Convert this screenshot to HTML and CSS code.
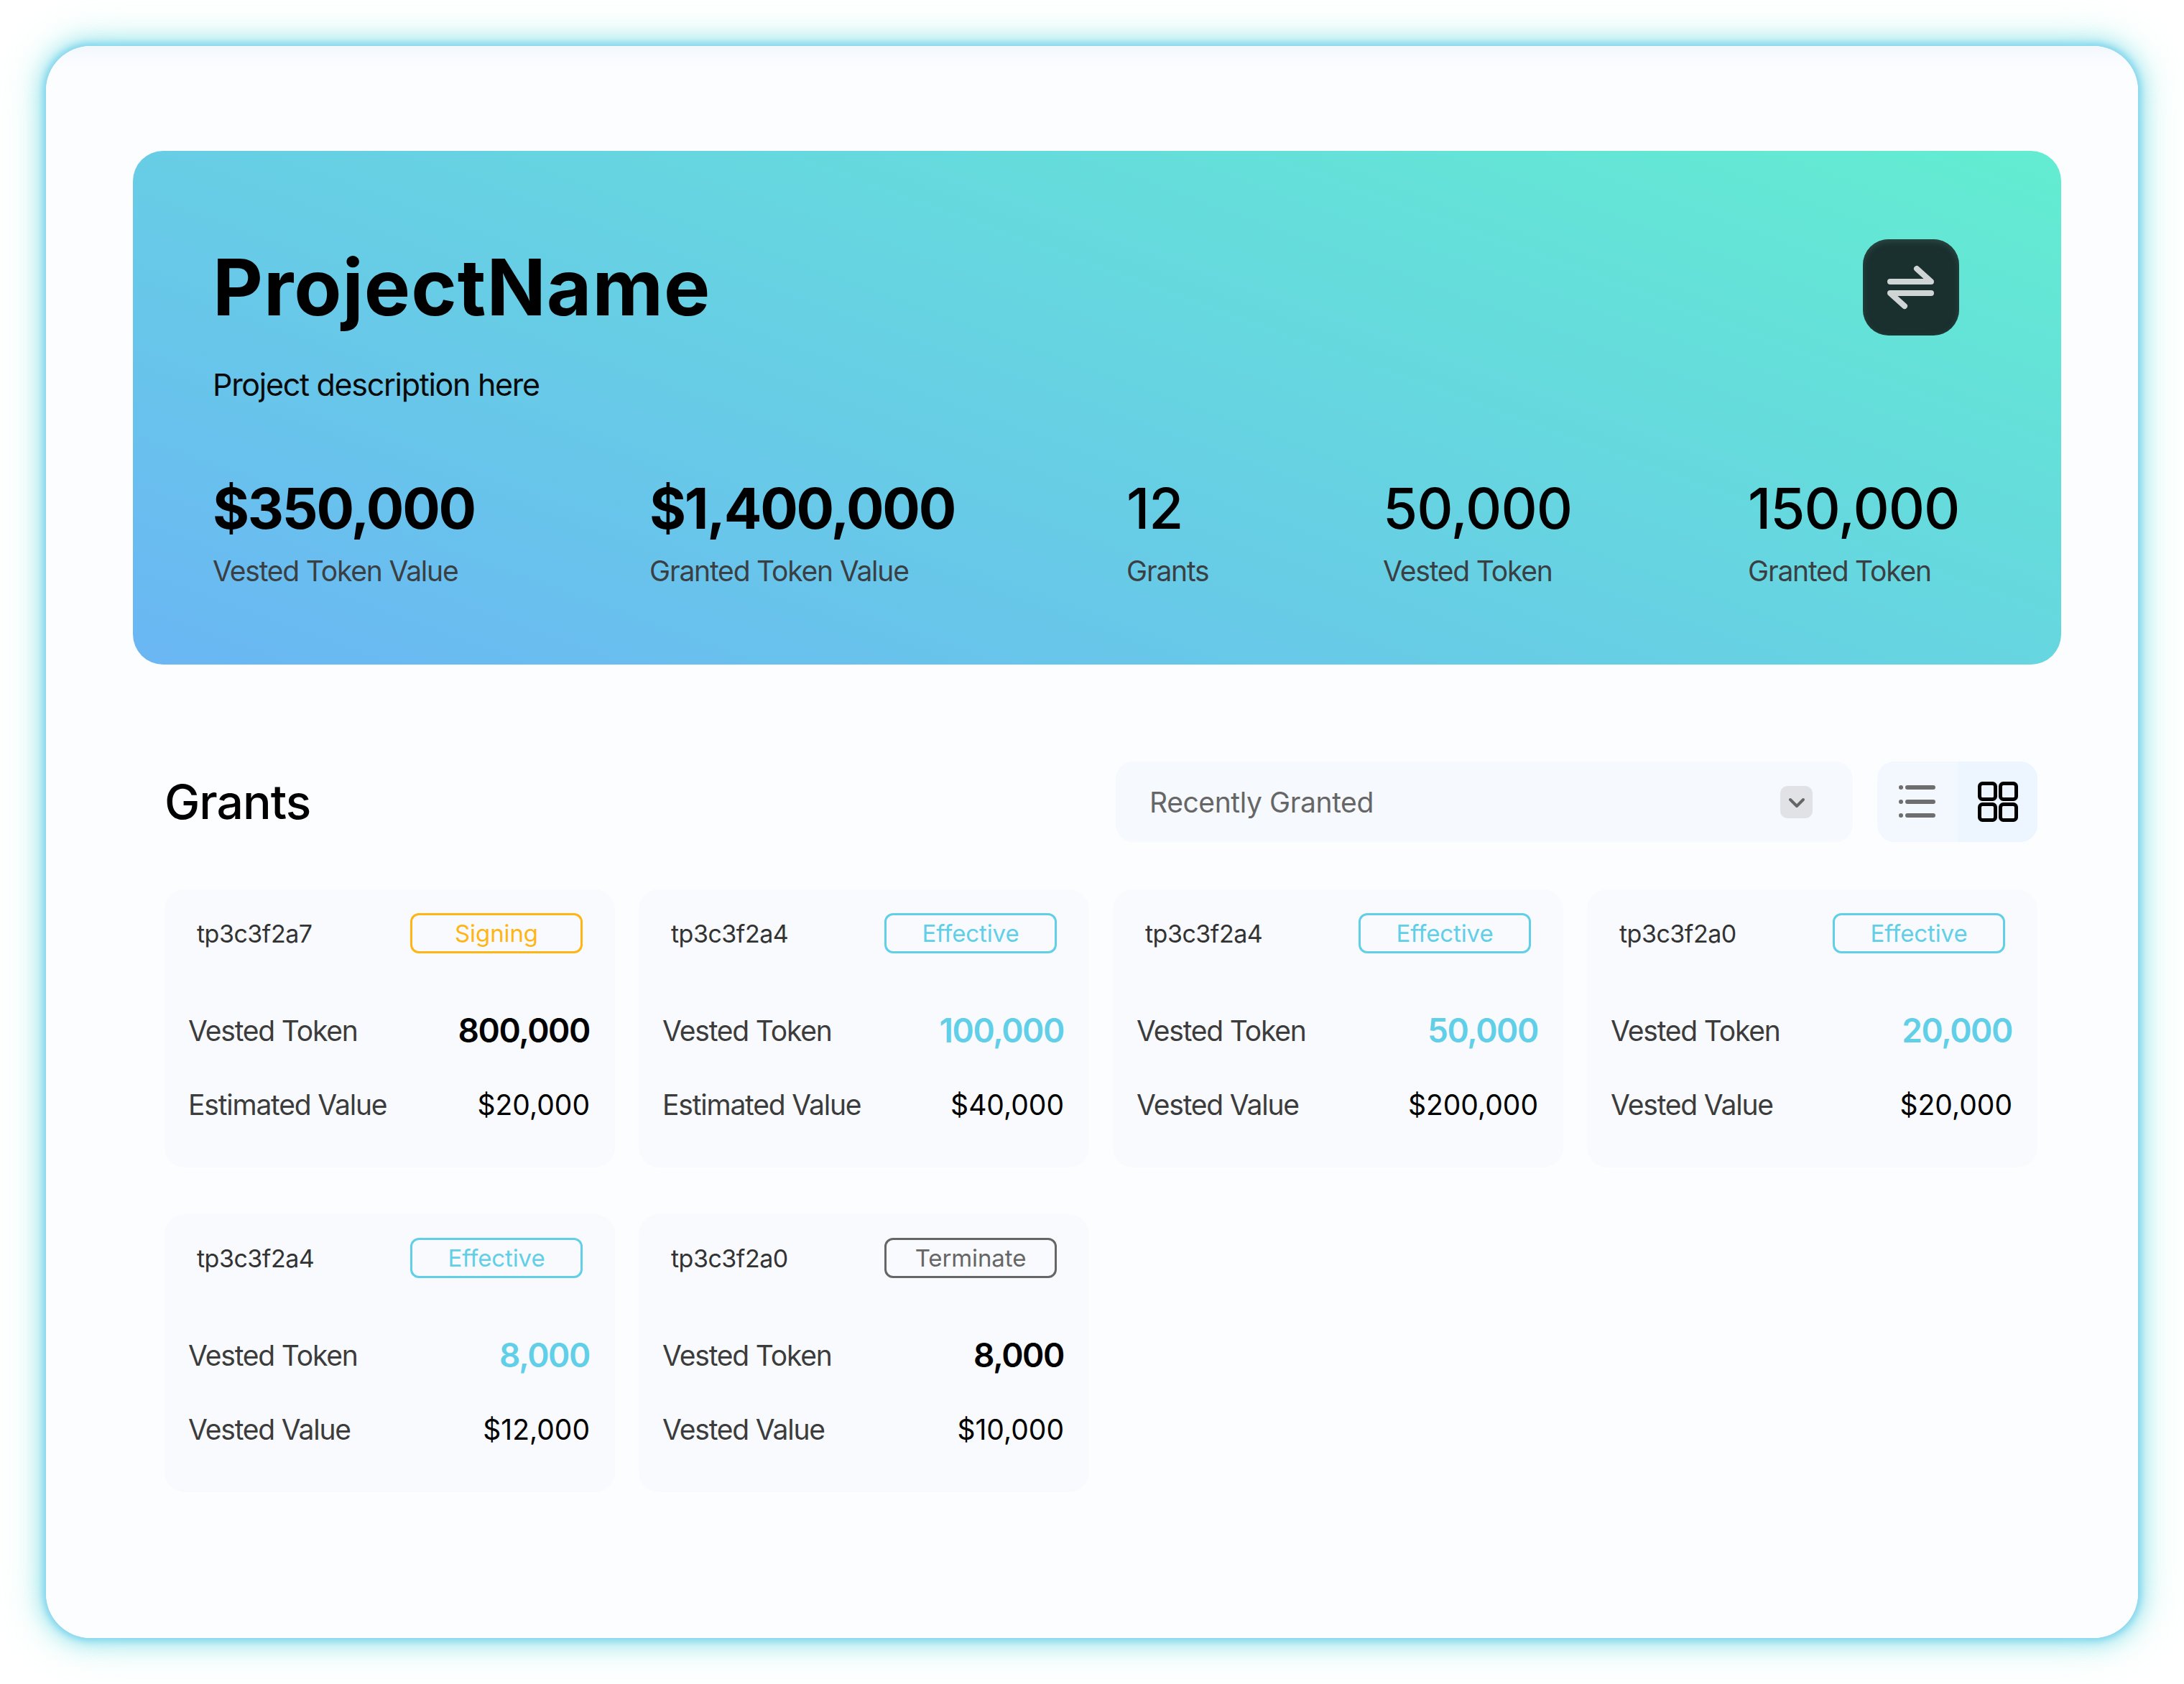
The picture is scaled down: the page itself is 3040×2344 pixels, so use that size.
FILE: index.html
```html
<!DOCTYPE html>
<html>
  <head>
    <meta charset="UTF-8">
    <title>Grants</title>
    <link rel="stylesheet" href="styles.css">
  </head>
  <body>
    <main class="window">
      <section class="hero">
        <div class="hero-top">
          <div>
            <h1 class="project-name">ProjectName</h1>
            <p class="project-desc">Project description here</p>
          </div>
          <button class="swap-btn">
            <svg width="134" height="134" viewBox="0 0 134 134" fill="none" stroke="#cfd4d4" stroke-width="8" stroke-linecap="round" stroke-linejoin="round">
              <path d="M38 59H95L75 41"/>
              <path d="M95 75H38L58 93"/>
            </svg>
          </button>
        </div>
        <div class="stats">
          <div class="stat"><div class="stat-num bold">$350,000</div><div class="stat-label">Vested Token Value</div></div>
          <div class="stat"><div class="stat-num bold">$1,400,000</div><div class="stat-label">Granted Token Value</div></div>
          <div class="stat"><div class="stat-num">12</div><div class="stat-label">Grants</div></div>
          <div class="stat"><div class="stat-num">50,000</div><div class="stat-label">Vested Token</div></div>
          <div class="stat"><div class="stat-num">150,000</div><div class="stat-label">Granted Token</div></div>
        </div>
      </section>

      <section class="grants">
        <div class="toolbar">
          <h2 class="grants-title">Grants</h2>
          <div class="select">
            <span>Recently Granted</span>
            <span class="select-arrow">
              <svg width="45" height="45" viewBox="0 0 45 45" fill="none" stroke="#666" stroke-width="4" stroke-linecap="round" stroke-linejoin="round"><path d="M14 19L23 28L32 19"/></svg>
            </span>
          </div>
          <div class="view-toggle">
            <span class="view-btn">
              <svg width="112" height="112" viewBox="0 0 112 112" fill="none" stroke="#6e6e6e" stroke-width="6" stroke-linecap="round">
                <path d="M42 36H78M42 56H78M42 75H78"/>
                <path d="M33 36h.01M33 56h.01M33 75h.01"/>
              </svg>
            </span>
            <span class="view-btn active">
              <svg width="111" height="112" viewBox="0 0 111 112" fill="none" stroke="#000" stroke-width="5">
                <rect x="30.500" y="30.500" width="22" height="22" rx="4"/>
                <rect x="59.500" y="30.500" width="22" height="22" rx="4"/>
                <rect x="30.500" y="59.500" width="22" height="22" rx="4"/>
                <rect x="59.500" y="59.500" width="22" height="22" rx="4"/>
              </svg>
            </span>
          </div>
        </div>

        <div class="card-grid">
          <article class="card">
            <div class="card-head"><span class="card-id">tp3c3f2a7</span><span class="badge signing">Signing</span></div>
            <div class="row"><span class="row-label">Vested Token</span><span class="row-token">800,000</span></div>
            <div class="row"><span class="row-label">Estimated Value</span><span class="row-value">$20,000</span></div>
          </article>
          <article class="card">
            <div class="card-head"><span class="card-id">tp3c3f2a4</span><span class="badge effective">Effective</span></div>
            <div class="row"><span class="row-label">Vested Token</span><span class="row-token blue">100,000</span></div>
            <div class="row"><span class="row-label">Estimated Value</span><span class="row-value">$40,000</span></div>
          </article>
          <article class="card">
            <div class="card-head"><span class="card-id">tp3c3f2a4</span><span class="badge effective">Effective</span></div>
            <div class="row"><span class="row-label">Vested Token</span><span class="row-token blue">50,000</span></div>
            <div class="row"><span class="row-label">Vested Value</span><span class="row-value">$200,000</span></div>
          </article>
          <article class="card">
            <div class="card-head"><span class="card-id">tp3c3f2a0</span><span class="badge effective">Effective</span></div>
            <div class="row"><span class="row-label">Vested Token</span><span class="row-token blue">20,000</span></div>
            <div class="row"><span class="row-label">Vested Value</span><span class="row-value">$20,000</span></div>
          </article>
          <article class="card">
            <div class="card-head"><span class="card-id">tp3c3f2a4</span><span class="badge effective">Effective</span></div>
            <div class="row"><span class="row-label">Vested Token</span><span class="row-token blue">8,000</span></div>
            <div class="row"><span class="row-label">Vested Value</span><span class="row-value">$12,000</span></div>
          </article>
          <article class="card">
            <div class="card-head"><span class="card-id">tp3c3f2a0</span><span class="badge terminate">Terminate</span></div>
            <div class="row"><span class="row-label">Vested Token</span><span class="row-token">8,000</span></div>
            <div class="row"><span class="row-label">Vested Value</span><span class="row-value">$10,000</span></div>
          </article>
        </div>
      </section>
    </main>
  </body>
</html>
```

FILE: styles.css
```css
html {
  font-family: "Inter", "Liberation Sans", sans-serif;
}
body {
  margin: 0;
  padding: 64px;
  width: 3040px;
  height: 2344px;
  box-sizing: border-box;
  background: #fff;
  overflow: hidden;
}
.window {
  width: 2912px;
  height: 2216px;
  box-sizing: border-box;
  padding: 146px 107px 0 121px;
  border-radius: 62px;
  background: linear-gradient(#f3f8fe, #fcfdff 30px);
  box-shadow: 0 0 8px 4px #86d6ee, 0 0 28px 8px rgba(130, 220, 235, 0.7), 0 0 60px 10px rgba(120, 235, 220, 0.3);
}

/* banner */
.hero {
  height: 715px;
  box-sizing: border-box;
  padding: 123px 142px 0 111px;
  border-radius: 42px;
  background: linear-gradient(20deg, #6ab6f4, #63edd1);
}
.hero-top {
  display: flex;
  justify-content: space-between;
  align-items: flex-start;
}
.project-name {
  margin: 0;
  font-size: 108px;
  line-height: 134px;
  font-weight: 700;
  letter-spacing: 1px;
  color: #000;
}
.project-desc {
  margin: 40px 0 0;
  font-size: 43px;
  line-height: 56px;
  letter-spacing: -1.300px;
  color: #0a0a0a;
}
.swap-btn {
  width: 134px;
  height: 134px;
  padding: 0;
  border: 0;
  border-radius: 36px;
  background: #19302e;
  box-shadow: inset 0 3px 8px #2f4a47;
}
.stats {
  display: grid;
  grid-template-columns: 608px 664px 357px 508px auto;
  margin-top: 97px;
}
.stat-num {
  font-size: 78px;
  line-height: 96px;
  letter-spacing: -1px;
  font-weight: 500;
  color: #000;
}
.stat-num.bold {
  font-weight: 700;
  letter-spacing: -2.300px;
}
.stat-label {
  margin-top: 14px;
  font-size: 39px;
  line-height: 50px;
  letter-spacing: -1.200px;
  color: #3a3f44;
}

/* grants */
.grants {
  padding: 0 33px 0 44px;
}
.toolbar {
  display: flex;
  align-items: center;
  margin-top: 135px;
  height: 112px;
}
.grants-title {
  margin: 0;
  flex: 1;
  font-size: 66px;
  font-weight: 500;
  letter-spacing: -1px;
  color: #000;
}
.select {
  display: flex;
  align-items: center;
  justify-content: space-between;
  width: 1026px;
  height: 112px;
  box-sizing: border-box;
  padding: 0 56px 0 47px;
  border-radius: 24px;
  background: #f6f9fe;
  font-size: 39px;
  letter-spacing: -0.400px;
  color: #666;
}
.select-arrow {
  display: block;
  width: 45px;
  height: 45px;
  border-radius: 10px;
  background: #e0e2e5;
}
.view-toggle {
  display: flex;
  margin-left: 34px;
  height: 112px;
  border-radius: 24px;
  overflow: hidden;
  background: #f3f8fe;
}
.view-btn {
  display: block;
  height: 112px;
}
.view-btn.active {
  background: #edf5fe;
}

.card-grid {
  display: grid;
  grid-template-columns: repeat(4, 627px);
  column-gap: 33px;
  row-gap: 65px;
  margin-top: 66px;
}
.card {
  height: 387px;
  box-sizing: border-box;
  padding: 33px 35px 0 33px;
  border-radius: 28px;
  background: #f8fafe;
}
.card-head {
  display: flex;
  align-items: center;
  justify-content: space-between;
  padding: 0 10px 0 12px;
  margin-bottom: 81px;
}
.card-id {
  font-size: 34px;
  letter-spacing: -0.500px;
  color: #333;
}
.badge {
  display: block;
  width: 240px;
  height: 56px;
  box-sizing: border-box;
  border: 3px solid;
  border-radius: 12px;
  font-size: 33px;
  line-height: 50px;
  text-align: center;
  letter-spacing: -0.100px;
}
.signing {
  border-color: #ffb514;
  color: #ffb514;
}
.effective {
  border-color: #62cfe8;
  color: #62cfe8;
}
.terminate {
  border-color: #666;
  color: #666;
}
.row {
  display: flex;
  align-items: center;
  justify-content: space-between;
  height: 52px;
  margin-bottom: 51px;
}
.row-label {
  font-size: 39px;
  letter-spacing: -1.200px;
  color: #3c3c3c;
}
.row-token {
  font-size: 46px;
  font-weight: 600;
  letter-spacing: -1.400px;
  color: #000;
}
.row-token.blue {
  color: #62cfe8;
}
.row-value {
  font-size: 39px;
  letter-spacing: 0;
  color: #000;
}
```
